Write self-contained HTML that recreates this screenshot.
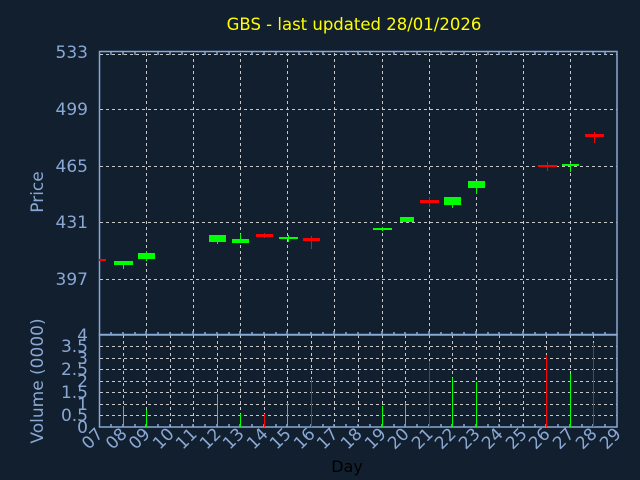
<!DOCTYPE html>
<html><head><meta charset="utf-8"><style>
html,body{margin:0;padding:0;background:#111f2f;}
svg{display:block;font-family:"DejaVu Sans","Liberation Sans",sans-serif;}
</style></head><body>
<svg width="640" height="480" xmlns="http://www.w3.org/2000/svg">
<rect width="640" height="480" fill="#111f2f"/>
<text x="354" y="30" fill="#ffff00" font-size="16.5" text-anchor="middle">GBS - last updated 28/01/2026</text>
<g stroke="#c8c8c8" stroke-width="1" stroke-dasharray="3,3" fill="none">
<path d="M100 54.5H617M100 109.5H617M100 166.5H617M100 222.5H617M100 279.5H617"/>
<path d="M146.5 53V335M193.5 53V335M240.5 53V335M287.5 53V335M334.5 53V335M382.5 53V335M429.5 53V335M476.5 53V335M523.5 53V335M570.5 53V335"/>
<path d="M100 346.5H617M100 358.5H617M100 369.5H617M100 381.5H617M100 392.5H617M100 404.5H617M100 415.5H617"/>
<path d="M123.5 335V427M146.5 335V427M170.5 335V427M193.5 335V427M217.5 335V427M240.5 335V427M264.5 335V427M287.5 335V427M311.5 335V427M334.5 335V427M358.5 335V427M382.5 335V427M405.5 335V427M429.5 335V427M452.5 335V427M476.5 335V427M499.5 335V427M523.5 335V427M546.5 335V427M570.5 335V427M593.5 335V427"/>
</g>
<g stroke="#8aa8d4" stroke-width="1.5" fill="none">
<rect x="99.5" y="51.5" width="517.5" height="283.5"/>
<rect x="99.5" y="334.5" width="517.5" height="92.5"/>
<path d="M111 52v3M123 52v3M135 52v3M158 52v3M170 52v3M182 52v3M205 52v3M217 52v3M229 52v3M252 52v3M264 52v3M276 52v3M299 52v3M311 52v3M323 52v3M346 52v3M358 52v3M370 52v3M394 52v3M405 52v3M417 52v3M441 52v3M452 52v3M464 52v3M488 52v3M499 52v3M511 52v3M535 52v3M546 52v3M558 52v3M582 52v3M593 52v3M605 52v3"/>
<path d="M111 335v-3M123 335v-3M135 335v-3M146 335v-4M158 335v-3M170 335v-3M182 335v-3M193 335v-4M205 335v-3M217 335v-3M229 335v-3M240 335v-4M252 335v-3M264 335v-3M276 335v-3M287 335v-4M299 335v-3M311 335v-3M323 335v-3M334 335v-4M346 335v-3M358 335v-3M370 335v-3M382 335v-4M394 335v-3M405 335v-3M417 335v-3M429 335v-4M441 335v-3M452 335v-3M464 335v-3M476 335v-4M488 335v-3M499 335v-3M511 335v-3M523 335v-4M535 335v-3M546 335v-3M558 335v-3M570 335v-4M582 335v-3M593 335v-3M605 335v-3"/>
<path d="M111 427v-3M123 427v-3M135 427v-3M146 427v-3M158 427v-3M170 427v-3M182 427v-3M193 427v-3M205 427v-3M217 427v-3M229 427v-3M240 427v-3M252 427v-3M264 427v-3M276 427v-3M287 427v-3M299 427v-3M311 427v-3M323 427v-3M334 427v-3M346 427v-3M358 427v-3M370 427v-3M382 427v-3M394 427v-3M405 427v-3M417 427v-3M429 427v-3M441 427v-3M452 427v-3M464 427v-3M476 427v-3M488 427v-3M499 427v-3M511 427v-3M523 427v-3M535 427v-3M546 427v-3M558 427v-3M570 427v-3M582 427v-3M593 427v-3M605 427v-3"/>
</g>
<g>
<rect x="99" y="259" width="7" height="2" fill="#ff0000"/>
<rect x="123" y="262" width="1" height="7" fill="#00ff00"/><rect x="114" y="261" width="19" height="4" fill="#00ff00"/>
<rect x="146" y="251" width="1" height="10" fill="#00ff00"/><rect x="138" y="253" width="17" height="6" fill="#00ff00"/>
<rect x="217" y="235" width="1" height="9" fill="#00ff00"/><rect x="209" y="235" width="17" height="7" fill="#00ff00"/>
<rect x="240" y="234" width="1" height="9" fill="#00ff00"/><rect x="232" y="239" width="17" height="4" fill="#00ff00"/>
<rect x="264" y="233" width="1" height="5" fill="#ff0000"/><rect x="256" y="234" width="17" height="3" fill="#ff0000"/>
<rect x="288" y="235" width="1" height="7" fill="#00ff00"/><rect x="279" y="237" width="19" height="2" fill="#00ff00"/>
<rect x="311" y="236" width="1" height="13" fill="#ff0000"/><rect x="303" y="238" width="17" height="3" fill="#ff0000"/>
<rect x="382" y="227" width="1" height="4" fill="#00ff00"/><rect x="373" y="228" width="19" height="2" fill="#00ff00"/>
<rect x="400" y="217" width="14" height="5" fill="#00ff00"/>
<rect x="429" y="197" width="1" height="10" fill="#ff0000"/><rect x="420" y="200" width="19" height="3" fill="#ff0000"/>
<rect x="452" y="197" width="1" height="11" fill="#00ff00"/><rect x="444" y="197" width="17" height="8" fill="#00ff00"/>
<rect x="476" y="181" width="1" height="13" fill="#00ff00"/><rect x="468" y="181" width="17" height="7" fill="#00ff00"/>
<rect x="547" y="162" width="1" height="9" fill="#ff0000"/><rect x="538" y="165" width="19" height="2" fill="#ff0000"/>
<rect x="570" y="163" width="1" height="9" fill="#00ff00"/><rect x="562" y="164" width="17" height="2" fill="#00ff00"/>
<rect x="594" y="132" width="1" height="11" fill="#ff0000"/><rect x="585" y="134" width="19" height="3" fill="#ff0000"/>
</g>
<g>
<rect x="123" y="406" width="1" height="21" fill="#00ff00"/>
<rect x="146" y="410" width="1" height="17" fill="#00ff00"/>
<rect x="217" y="394" width="1" height="33" fill="#00ff00"/>
<rect x="240" y="414" width="1" height="13" fill="#00ff00"/>
<rect x="264" y="414" width="1" height="13" fill="#ff0000"/>
<rect x="287" y="403" width="1" height="24" fill="#00ff00"/>
<rect x="311" y="379" width="1" height="48" fill="#ff0000"/>
<rect x="382" y="406" width="1" height="21" fill="#00ff00"/>
<rect x="405" y="403" width="1" height="24" fill="#00ff00"/>
<rect x="429" y="361" width="1" height="66" fill="#ff0000"/>
<rect x="452" y="378" width="1" height="49" fill="#00ff00"/>
<rect x="476" y="382" width="1" height="45" fill="#00ff00"/>
<rect x="546" y="355" width="1" height="72" fill="#ff0000"/>
<rect x="570" y="374" width="1" height="53" fill="#00ff00"/>
<rect x="593" y="343" width="1" height="84" fill="#ff0000"/>
</g>
<g fill="#8aa8d4" font-size="17" text-anchor="end">
<text x="88" y="58">533</text>
<text x="88" y="115">499</text>
<text x="88" y="172">465</text>
<text x="88" y="228">431</text>
<text x="88" y="285">397</text>
<text x="88" y="341">4</text>
<text x="88" y="352">3.5</text>
<text x="88" y="364">3</text>
<text x="88" y="375">2.5</text>
<text x="88" y="387">2</text>
<text x="88" y="398">1.5</text>
<text x="88" y="410">1</text>
<text x="88" y="421">0.5</text>
<text x="88" y="433">0</text>
</g>
<text transform="translate(43,192) rotate(-90)" fill="#8aa8d4" font-size="17" text-anchor="middle">Price</text>
<text transform="translate(43,381) rotate(-90)" fill="#8aa8d4" font-size="17" text-anchor="middle">Volume (0000)</text>
<g fill="#8aa8d4" font-size="17" text-anchor="end">
<text transform="translate(104,435) rotate(-45)">07</text>
<text transform="translate(128,435) rotate(-45)">08</text>
<text transform="translate(151,435) rotate(-45)">09</text>
<text transform="translate(175,435) rotate(-45)">10</text>
<text transform="translate(198,435) rotate(-45)">11</text>
<text transform="translate(222,435) rotate(-45)">12</text>
<text transform="translate(245,435) rotate(-45)">13</text>
<text transform="translate(269,435) rotate(-45)">14</text>
<text transform="translate(292,435) rotate(-45)">15</text>
<text transform="translate(316,435) rotate(-45)">16</text>
<text transform="translate(339,435) rotate(-45)">17</text>
<text transform="translate(363,435) rotate(-45)">18</text>
<text transform="translate(387,435) rotate(-45)">19</text>
<text transform="translate(410,435) rotate(-45)">20</text>
<text transform="translate(434,435) rotate(-45)">21</text>
<text transform="translate(457,435) rotate(-45)">22</text>
<text transform="translate(481,435) rotate(-45)">23</text>
<text transform="translate(504,435) rotate(-45)">24</text>
<text transform="translate(528,435) rotate(-45)">25</text>
<text transform="translate(551,435) rotate(-45)">26</text>
<text transform="translate(575,435) rotate(-45)">27</text>
<text transform="translate(598,435) rotate(-45)">28</text>
<text transform="translate(622,435) rotate(-45)">29</text>
</g>
<text x="347" y="472" fill="#000000" font-size="16" text-anchor="middle">Day</text>
</svg>
</body></html>
